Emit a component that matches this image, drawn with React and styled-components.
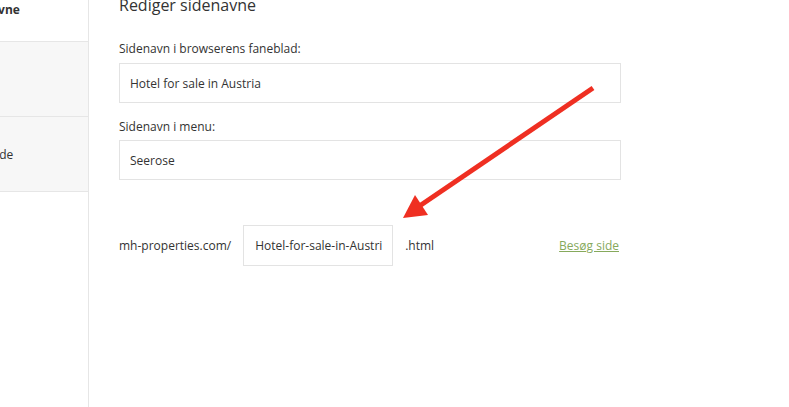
import React from 'react';
import styled, { createGlobalStyle } from 'styled-components';

const GlobalStyle = createGlobalStyle`
  body {
    margin: 0;
    font-family: "Open Sans", "Liberation Sans", sans-serif;
    color: #333;
    background: #fff;
  }
`;

const Page = styled.div`
  position: relative;
  display: flex;
  width: 789px;
  height: 407px;
  overflow: hidden;
`;

const Sidebar = styled.aside`
  width: 88px;
  flex-shrink: 0;
  border-right: 1px solid #e6e6e6;
  overflow: hidden;
`;

const SideInner = styled.div`
  width: 250px;
  margin-left: -62px;
`;

const SideItem = styled.div`
  display: flex;
  align-items: ${p => (p.top ? 'flex-start' : 'center')};
  height: ${p => p.h}px;
  padding: ${p => (p.top ? '1px' : '0')} 0 0 ${p => p.indent || 20}px;
  box-sizing: border-box;
  background: ${p => (p.gray ? '#f7f7f7' : '#fff')};
  border-bottom: 1px solid #e6e6e6;
  font-size: 12px;
  font-weight: ${p => (p.bold ? 700 : 400)};
  color: #333;
  white-space: nowrap;
`;

const Main = styled.main`
  flex: 1;
  padding-left: 30px;
`;

const Heading = styled.h2`
  margin: -7px 0 0;
  font-size: 16px;
  line-height: 24px;
  font-weight: 400;
  color: #333;
`;

const Field = styled.div`
  width: 502px;
  margin-top: ${p => p.mt}px;
`;

const Label = styled.div`
  font-size: 12px;
  line-height: 18px;
  margin-bottom: ${p => p.mb}px;
`;

const TextBox = styled.div`
  display: flex;
  align-items: center;
  box-sizing: border-box;
  width: ${p => p.w || '100%'};
  height: ${p => p.h || 40}px;
  padding: 0 ${p => p.pr || 10}px 0 ${p => p.pl || 10}px;
  border: 1px solid #e3e3e3;
  font-size: 12px;
  color: #333;
  white-space: nowrap;
`;

const BoxText = styled.span`
  min-width: 0;
  overflow: hidden;
`;

const UrlRow = styled.div`
  display: flex;
  align-items: center;
  width: 500px;
  margin-top: 45px;
  font-size: 12px;
`;

const Suffix = styled.span`
  margin-left: 12px;
`;

const Prefix = styled.span`
  margin-right: 12px;
`;

const VisitLink = styled.a`
  margin-left: auto;
  color: #86a95c;
  text-decoration: underline;
  font-size: 12px;
  cursor: pointer;
`;

const Arrow = styled.svg`
  position: absolute;
  left: 0;
  top: 0;
  pointer-events: none;
`;

export default function App() {
  return (
    <>
      <GlobalStyle />
      <Page>
        <Sidebar>
          <SideInner>
            <SideItem h={42} top bold>Sidenavne</SideItem>
            <SideItem h={75} gray />
            <SideItem h={75} gray indent={23}>Skjul side</SideItem>
          </SideInner>
        </Sidebar>
        <Main>
          <Heading>Rediger sidenavne</Heading>
          <Field mt={23}>
            <Label mb={5}>Sidenavn i browserens faneblad:</Label>
            <TextBox><BoxText>Hotel for sale in Austria</BoxText></TextBox>
          </Field>
          <Field mt={15}>
            <Label mb={4}>Sidenavn i menu:</Label>
            <TextBox><BoxText>Seerose</BoxText></TextBox>
          </Field>
          <UrlRow>
            <Prefix>mh-properties.com/</Prefix>
            <TextBox w="150px" h={41} pl={11} pr={10}>
              <BoxText>Hotel-for-sale-in-Austria</BoxText>
            </TextBox>
            <Suffix>.html</Suffix>
            <VisitLink>Besøg side</VisitLink>
          </UrlRow>
        </Main>
        <Arrow width="789" height="407" viewBox="0 0 789 407">
          <line x1="593" y1="88" x2="418" y2="207" stroke="#ef2f22" strokeWidth="5" strokeLinecap="butt" />
          <polygon points="403,218 415,195 428,215" fill="#ef2f22" />
        </Arrow>
      </Page>
    </>
  );
}
